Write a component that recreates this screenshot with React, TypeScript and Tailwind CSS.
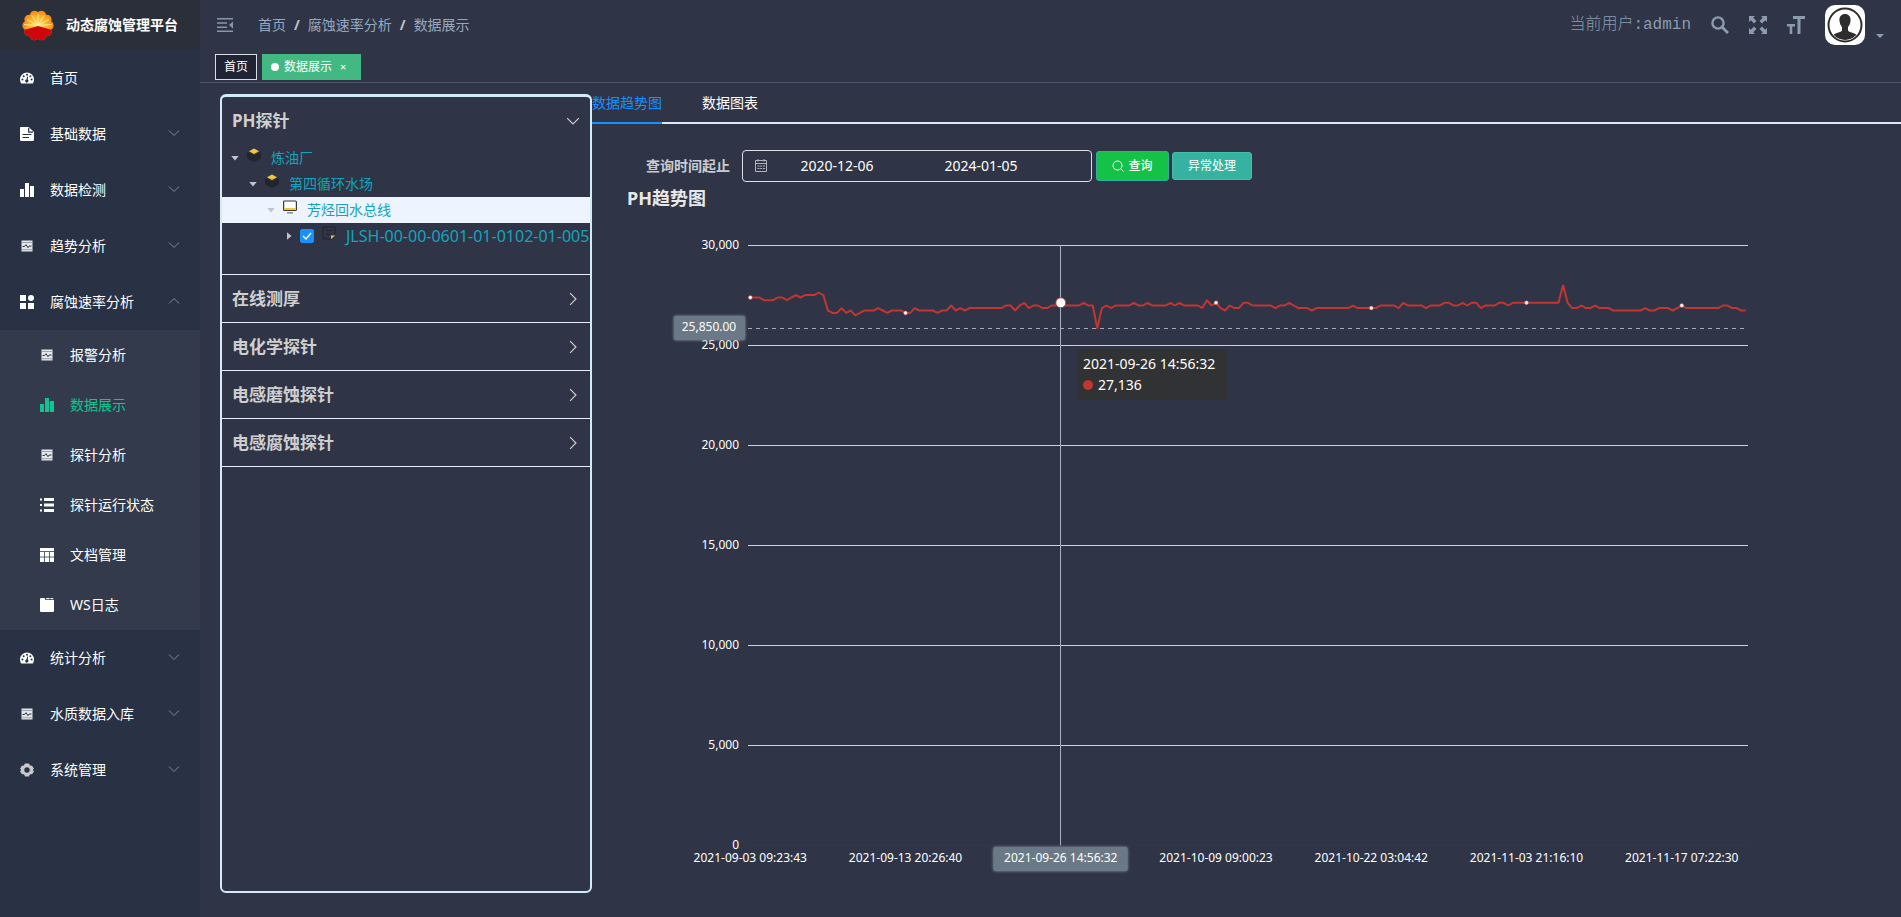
import React, { useState } from 'react'
import clsx from 'clsx'

type IconName = 'dashboard' | 'doc' | 'bars' | 'monitor' | 'grid' | 'list' | 'table' | 'tab' | 'gear'

interface MenuItem {
  label: string
  icon: IconName
  arrow?: 'down' | 'up'
  children?: { label: string; icon: IconName; active?: boolean }[]
}

const menu: MenuItem[] = [
  { label: '首页', icon: 'dashboard' },
  { label: '基础数据', icon: 'doc', arrow: 'down' },
  { label: '数据检测', icon: 'bars', arrow: 'down' },
  { label: '趋势分析', icon: 'monitor', arrow: 'down' },
  {
    label: '腐蚀速率分析',
    icon: 'grid',
    arrow: 'up',
    children: [
      { label: '报警分析', icon: 'monitor' },
      { label: '数据展示', icon: 'bars', active: true },
      { label: '探针分析', icon: 'monitor' },
      { label: '探针运行状态', icon: 'list' },
      { label: '文档管理', icon: 'table' },
      { label: 'WS日志', icon: 'tab' },
    ],
  },
  { label: '统计分析', icon: 'dashboard', arrow: 'down' },
  { label: '水质数据入库', icon: 'monitor', arrow: 'down' },
  { label: '系统管理', icon: 'gear', arrow: 'down' },
]

function MenuIcon({ name }: { name: IconName }) {
  return (
    <svg viewBox="0 0 14 14" className="h-3.5 w-3.5 shrink-0" fill="currentColor">
      {name === 'dashboard' && (
        <>
          <path d="M7 1.5a7 7 0 0 0-7 7c0 1.5.4 2.8 1.1 4h11.8c.7-1.2 1.1-2.5 1.1-4a7 7 0 0 0-7-7Z" />
          <g fill="#293145">
            <circle cx="2.4" cy="8.6" r="1" />
            <circle cx="3.7" cy="5.2" r="1" />
            <circle cx="7" cy="3.7" r="1" />
            <circle cx="10.4" cy="5.2" r="1" />
            <circle cx="11.6" cy="8.6" r="1" />
            <path d="M7.3 5.4 8.2 5.7 7.7 8.6A1.6 1.6 0 1 1 6.4 8.4Z" />
          </g>
        </>
      )}
      {name === 'doc' && (
        <>
          <path d="M1.2 0H8.5L14 5v7.8c0 .7-.5 1.2-1.2 1.2H1.2C.5 14 0 13.5 0 12.8V1.2C0 .5.5 0 1.2 0Z" />
          <path d="M8.7 1v4.1H13M2.5 7.5h9M2.5 10.5h6.5" fill="none" stroke="#293145" strokeWidth="1.2" />
        </>
      )}
      {name === 'bars' && <path d="M0 6h4v8H0ZM5 0h4v14H5ZM10 3h4v11h-4Z" />}
      {name === 'monitor' && (
        <g opacity=".88">
          <path d="M1.500 1.500h11v11h-11Z" />
          <path d="M1.500 3.500h11M1.500 10.700h11" stroke="#8b909c" strokeWidth=".7" />
          <path d="M2.500 7.500h2L6 5.700l2 3 1.200-1.700h2.300" fill="none" stroke="#293145" strokeWidth="1" />
        </g>
      )}
      {name === 'grid' && (
        <>
          <path d="M0 0h6v6H0ZM0 8h6v6H0ZM8 8h6v6H8Z" />
          <circle cx="11" cy="3" r="3" />
        </>
      )}
      {name === 'list' && <path d="M0 .5h2v2H0ZM4 0h10v3H4ZM0 6h2v2H0ZM4 5.5h10v3H4ZM0 11.5h2v2H0ZM4 11h10v3H4Z" />}
      {name === 'table' && (
        <>
          <path d="M0 0h14v14H0Z" />
          <path d="M0 3.5h14M0 9h14M4.5 4v10M9.5 4v10" stroke="#323a4c" strokeWidth=".8" />
        </>
      )}
      {name === 'tab' && (
        <>
          <path d="M1 0h3.5l1 2H14v11a1 1 0 0 1-1 1H1a1 1 0 0 1-1-1V1a1 1 0 0 1 1-1Z" />
          <path d="M6 0h3.5v1.2H6.5ZM10.3 0H13l.5 1.2h-2.9Z" />
        </>
      )}
      {name === 'gear' && (
        <path
          fill="#c9cacc"
          fillRule="evenodd"
          d="m4.800.5-.8 2-2.200.2L0 6l1.300 1L0 8.300l1.900 3 2.200-.1.900 2.300h4l.9-2.300 2.200.1 1.900-3L12.700 7 14 5.800l-1.900-3.100-2.200-.1L9 .5ZM7 4.300a2.700 2.700 0 1 1 0 5.400 2.700 2.700 0 0 1 0-5.400Z"
        />
      )}
    </svg>
  )
}

function Chevron({ dir, className }: { dir: 'down' | 'up' | 'right'; className: string }) {
  const paths = {
    down: 'M1 3.5 6 8.5 11 3.5',
    up: 'M1 8.5 6 3.5 11 8.5',
    right: 'M3.5 1 8.5 6 3.5 11',
  }
  return (
    <svg viewBox="0 0 12 12" className={className} fill="none" stroke="currentColor">
      <path d={paths[dir]} />
    </svg>
  )
}

function Logo() {
  const petals = Array.from({ length: 10 }, (_, i) => {
    const a = ((i * 36 + 18) * Math.PI) / 180
    return { x: 16 + Math.sin(a) * 11, y: 15.5 - Math.cos(a) * 10.5 }
  })
  return (
    <svg viewBox="0 0 32 31" className="h-[31px] w-8 shrink-0">
      <defs>
        <clipPath id="flower">
          <circle cx="16" cy="15.5" r="12" />
          {petals.map((p, i) => (
            <circle key={i} cx={p.x} cy={p.y} r="4.7" />
          ))}
        </clipPath>
        <radialGradient id="sun" cx=".5" cy=".5" r=".5">
          <stop offset="0" stopColor="#ffe46a" />
          <stop offset=".6" stopColor="#fdb022" />
          <stop offset="1" stopColor="#f5821a" />
        </radialGradient>
      </defs>
      <g clipPath="url(#flower)">
        <rect width="32" height="31" fill="url(#sun)" />
        <path
          d="M16 15.500 16 4M16 15.500 10 5.500M16 15.500 22 5.500M16 15.500 5 9.500M16 15.500 27 9.500M16 15.500 2 14.500M16 15.500 30 14.500"
          stroke="#fff3b0"
          strokeWidth=".8"
        />
        <path d="M0 20.500Q9 18 16 16 23 18 32 20.500V31H0Z" fill="#cf060c" />
      </g>
    </svg>
  )
}

function Sidebar() {
  return (
    <nav className="w-[200px] shrink-0 bg-[#293145] text-sm text-white">
      <a href="#" className="flex h-[50px] items-center gap-3 bg-[#2b2f3a] pl-[22px] font-bold">
        <Logo />
        动态腐蚀管理平台
      </a>
      <ul>
        {menu.map((item) => (
          <li key={item.label}>
            <a href="#" className="flex h-14 items-center pr-5 pl-5">
              <MenuIcon name={item.icon} />
              <span className="ml-4 flex-1">{item.label}</span>
              {item.arrow && <Chevron dir={item.arrow} className="mb-0.5 h-3 w-3 text-[#838997]" />}
            </a>
            {item.children && (
              <ul className="bg-[#323a4c]">
                {item.children.map((child) => (
                  <li key={child.label}>
                    <a
                      href="#"
                      className={clsx('flex h-[50px] items-center gap-4 pl-10', child.active && 'text-[#10c493]')}
                    >
                      <MenuIcon name={child.icon} />
                      {child.label}
                    </a>
                  </li>
                ))}
              </ul>
            )}
          </li>
        ))}
      </ul>
    </nav>
  )
}

function Navbar() {
  return (
    <header className="flex h-[50px] items-center text-[#97a8be]">
      <button type="button" aria-label="收起菜单" className="ml-[17px]">
        <svg viewBox="0 0 16 14" className="h-3.5 w-4" fill="#8996a8">
          <path d="M0 0h16v1.5H0ZM0 4.2h10v1.5H0ZM0 8.4h10v1.5H0ZM0 12.5h16V14H0ZM16 3.5v7L12 7Z" />
        </svg>
      </button>
      <nav className="ml-[25px] flex gap-2 text-sm">
        <a href="#">首页</a>
        <span className="font-bold text-[#c0c4cc]">/</span>
        <a href="#">腐蚀速率分析</a>
        <span className="font-bold text-[#c0c4cc]">/</span>
        <span>数据展示</span>
      </nav>
      <div className="ml-auto flex items-center pr-[17px] text-[#8b9bb0]">
        <span className="mr-5 font-['Liberation_Mono','Noto_Sans_CJK_SC',monospace] text-base font-light">
          当前用户:admin
        </span>
        <button type="button" aria-label="搜索" className="mr-5">
          <svg viewBox="0 0 18 18" className="h-[18px] w-[18px]" fill="none" stroke="currentColor">
            <circle cx="7" cy="7" r="5.6" strokeWidth="2.4" />
            <path d="m11 11 6 6" strokeWidth="2.8" />
          </svg>
        </button>
        <button type="button" aria-label="全屏" className="mr-5">
          <svg viewBox="0 0 18 18" className="h-[18px] w-[18px]" fill="currentColor">
            <path d="M0 0h6L4.2 1.8 7.5 5 5 7.5 1.8 4.2 0 6ZM18 0v6l-1.8-1.8L13 7.5 10.5 5l3.300-3.200L12 0ZM0 18v-6l1.800 1.800L5 10.5 7.5 13l-3.300 3.200L6 18ZM18 18h-6l1.800-1.800L10.5 13l2.500-2.500 3.200 3.300L18 12Z" />
          </svg>
        </button>
        <button type="button" aria-label="字号" className="mr-5">
          <svg viewBox="0 0 18 18" className="h-[18px] w-[18px]" fill="currentColor">
            <path d="M6 0h12v3h-4.5v15h-3V3H6ZM0 8h8v2.5H5.3V18H2.7v-7.5H0Z" />
          </svg>
        </button>
        <button type="button" aria-label="用户菜单" className="flex items-end gap-[11px]">
          <svg viewBox="0 0 40 40" className="h-10 w-10 rounded-[10px] bg-white">
            <clipPath id="face">
              <circle cx="20" cy="20" r="15" />
            </clipPath>
            <circle cx="20" cy="20" r="16.5" fill="none" stroke="#2d2d2d" strokeWidth="2" />
            <g clipPath="url(#face)" fill="#2d2d2d">
              <path d="M20 9c4 0 6 3 5.500 7-.3 3-1.500 5-2.500 6v3.500c1 2 7 2.500 10 5V38H7v-7.500c3-2.500 9-3 10-5V22c-1-1-2.200-3-2.500-6C14 12 16 9 20 9Z" />
            </g>
          </svg>
          <svg viewBox="0 0 8 4" className="mb-[7px] h-1 w-2" fill="currentColor">
            <path d="M0 0h8L4 4Z" />
          </svg>
        </button>
      </div>
    </header>
  )
}

function TagsView() {
  return (
    <div className="flex h-[33px] items-start gap-[5px] border-b border-[#495566] pt-1 pl-[15px] text-xs text-white">
      <a href="#" className="flex h-[26px] items-center border border-[#d8dce5] bg-[#1f2334] px-2">
        首页
      </a>
      <a href="#" className="flex h-[26px] items-center bg-[#42b983] px-[9px]">
        <span className="mr-[5px] h-2 w-2 rounded-full bg-white" />
        数据展示
        <span className="ml-2 w-3 text-[11px]">×</span>
      </a>
    </div>
  )
}

function Caret({ open, className }: { open?: boolean; className: string }) {
  return (
    <svg viewBox="0 0 8 8" className={clsx('h-2 w-2 shrink-0', className)} fill="currentColor">
      <path d={open ? 'M.3 2h7.4L4 6.5Z' : 'M2 .3v7.4L6.5 4Z'} />
    </svg>
  )
}

function StackIcon() {
  return (
    <svg viewBox="0 0 14 14" className="mb-1.5 h-3.5 w-3.5 shrink-0">
      <path d="M0 4v6.500l7 3.500 7-3.500V4L7 7Z" fill="#22252e" />
      <path d="m7 .5 5 2.700-5 2.800-5-2.800Z" fill="#f2c83a" />
    </svg>
  )
}

function ProbeTree() {
  const [checked, setChecked] = useState(true)

  return (
    <ul className="pb-[25px] text-sm whitespace-nowrap text-[#16a2bd]">
      <li className="flex h-[26px] items-center pl-[9px]">
        <Caret open className="text-[#c0c4cc]" />
        <span className="ml-2 flex items-center gap-2.5">
          <StackIcon />
          炼油厂
        </span>
      </li>
      <li className="flex h-[26px] items-center pl-[27px]">
        <Caret open className="text-[#c0c4cc]" />
        <span className="ml-2 flex items-center gap-2.5">
          <StackIcon />
          第四循环水场
        </span>
      </li>
      <li className="flex h-[26px] items-center bg-[#edf4fe] pl-[45px]">
        <Caret open className="text-[#c0c4cc]" />
        <span className="ml-2 flex items-center gap-2.5">
          <svg viewBox="0 0 14 14" className="mb-1.5 h-3.5 w-3.5 shrink-0">
            <rect x=".6" y="1" width="12.800" height="9.500" rx="1" fill="#fff" stroke="#3a3a3a" strokeWidth="1.200" />
            <path d="M1.200 8h11.600v2H1.200Z" fill="#f2c83a" />
            <path d="M4 12.800h6" stroke="#777" strokeWidth="1.200" />
          </svg>
          芳烃回水总线
        </span>
      </li>
      <li className="flex h-[26px] items-center pl-[63px]">
        <Caret className="text-[#c0c4cc]" />
        <label className="ml-[7px] flex items-center">
          <span className="relative h-3.5 w-3.5">
            <input
              type="checkbox"
              checked={checked}
              onChange={(e) => setChecked(e.target.checked)}
              className="block h-3.5 w-3.5 appearance-none rounded-xs border border-[#1890ff] checked:bg-[#1890ff]"
            />
            {checked && (
              <svg
                viewBox="0 0 14 14"
                className="pointer-events-none absolute inset-0"
                fill="none"
                stroke="#fff"
                strokeWidth="1.3"
              >
                <path d="m3 7 3 3 5-6" />
              </svg>
            )}
          </span>
          <svg viewBox="0 0 14 14" className="mr-2.5 mb-1.5 ml-2 h-3.5 w-3.5 shrink-0" fill="none">
            <path d="M13 8V2a1 1 0 0 0-1-1H2a1 1 0 0 0-1 1v10a1 1 0 0 0 1 1h7M4 4.5h7M4 8h4" stroke="#22252e" strokeWidth="1.2" />
            <path d="M9 13V9.5h4Z" fill="#f2c83a" />
          </svg>
          <span className="text-base">JLSH-00-00-0601-01-0102-01-005</span>
        </label>
      </li>
    </ul>
  )
}

const probeGroups = ['在线测厚', '电化学探针', '电感磨蚀探针', '电感腐蚀探针']

function ProbePanel() {
  return (
    <aside className="mt-[11px] mb-6 ml-5 w-[372px] shrink-0 overflow-hidden rounded-md border-2 border-t-3 border-[#d3ebf9] text-[#cfcfcf]">
      <section className="border-b border-[#e6effb]">
        <button type="button" className="flex h-12 w-full items-center justify-between px-2.5 text-[17px] font-bold">
          PH探针
          <Chevron dir="down" className="h-3.5 w-3.5" />
        </button>
        <ProbeTree />
      </section>
      {probeGroups.map((name) => (
        <button
          key={name}
          type="button"
          className="flex h-12 w-full items-center justify-between border-b border-[#e6effb] px-2.5 text-[17px] font-bold"
        >
          {name}
          <Chevron dir="right" className="h-3.5 w-3.5" />
        </button>
      ))}
    </aside>
  )
}

// consecutive readings, stored as [value, count]
const readings: [number, number][] = [
  [27400, 3], [27264, 3], [27400, 2], [27264, 1], [27400, 1], [27520, 1], [27400, 1], [27520, 3], [27650, 1],
  [27520, 1], [26750, 1], [26630, 2], [26870, 1], [26630, 1], [26750, 1], [26500, 1], [26630, 1], [26750, 3],
  [26870, 1], [26750, 1], [26630, 1], [26750, 3], [26630, 2], [26870, 1], [26750, 4], [26630, 1], [26750, 2],
  [27000, 1], [26750, 1], [26870, 1], [26750, 1], [26870, 8], [27000, 2], [26750, 1], [27000, 1], [27136, 1],
  [26870, 1], [27000, 2], [26870, 2], [27000, 2], [27136, 1], [27000, 4], [27136, 1], [27000, 2], [25850, 1],
  [26870, 1], [27000, 1], [26870, 1], [27000, 4], [27136, 1], [27000, 2], [27136, 1], [27000, 4], [27136, 1],
  [27000, 1], [27136, 1], [27000, 4], [26870, 1], [27264, 1], [27000, 1], [27136, 1], [26870, 1], [26750, 1],
  [27000, 1], [26870, 2], [27136, 2], [27000, 5], [26870, 1], [27000, 2], [27136, 1], [27000, 1], [26870, 3],
  [26750, 1], [26870, 8], [27000, 1], [26870, 5], [27000, 4], [26870, 1], [27136, 1], [27000, 4], [26870, 1],
  [27000, 3], [27136, 2], [27000, 2], [27136, 1], [27000, 1], [27136, 2], [26870, 1], [27000, 3], [27136, 2],
  [27000, 1], [27136, 11], [28030, 1], [27136, 1], [26870, 2], [27000, 1], [26870, 2], [27000, 1], [26870, 3],
  [26750, 7], [26870, 1], [26750, 2], [26870, 3], [26750, 1], [26870, 1], [27000, 1], [26870, 8], [27000, 2],
  [26870, 2], [26750, 2],
]
const series = readings.flatMap(([value, count]) => Array<number>(count).fill(value))

const yTicks = [30000, 25000, 20000, 15000, 10000, 5000, 0]
const xTicks = [
  '2021-09-03 09:23:43',
  '2021-09-13 20:26:40',
  '2021-09-26 14:56:32',
  '2021-10-09 09:00:23',
  '2021-10-22 03:04:42',
  '2021-11-03 21:16:10',
  '2021-11-17 07:22:30',
]
const tickEvery = 34
const activeIndex = 68

const left = 156
const right = 1156
const top = 33.5
const bottom = 633.5
const band = (right - left) / series.length
const xAt = (i: number) => left + band * (i + 0.5)
const yAt = (v: number) => bottom - (v / 30000) * (bottom - top)

function TrendChart() {
  const activeX = Math.floor(xAt(activeIndex)) + 0.5
  return (
    <svg viewBox="0 0 1309 680" className="block h-auto w-full text-xs" fill="#fff">
      <defs>
        <filter id="glow" x="-10%" y="-30%" width="120%" height="160%">
          <feDropShadow dx="0" dy="0" stdDeviation="1.5" floodColor="#8a97a3" />
        </filter>
      </defs>
      {yTicks.map((v) => (
        <g key={v}>
          <line x1={left} x2={right} y1={yAt(v)} y2={yAt(v)} stroke={v === 0 ? '#333842' : '#c9d2de'} />
          <text x={left - 9} y={yAt(v) + 3} textAnchor="end">
            {v.toLocaleString('en-US')}
          </text>
        </g>
      ))}

      <line x1={left} x2={right} y1={yAt(25850)} y2={yAt(25850)} stroke="#a3aab8" strokeDasharray="4 4" />
      <line x1={activeX} x2={activeX} y1={top} y2={bottom} stroke="#a9b0bd" />
      <polyline
        points={series.map((v, i) => `${xAt(i)},${yAt(v)}`).join(' ')}
        fill="none"
        stroke="#c23531"
        strokeWidth="2"
        strokeLinejoin="bevel"
      />
      {xTicks.map((_, i) => {
        const index = i * tickEvery
        return (
          <circle
            key={index}
            cx={xAt(index)}
            cy={yAt(series[index])}
            r={index === activeIndex ? 5 : 2}
            stroke="#c23531"
            strokeWidth={index === activeIndex ? 1 : 0.5}
          />
        )
      })}

      {/* axis pointer labels */}
      <rect x="82" y="104" width="71" height="24" rx="2" fill="#6a7985" filter="url(#glow)" />
      <text x="117" y="119" textAnchor="middle">
        25,850.00
      </text>
      <rect x={activeX - 67} y="635" width="134" height="24" rx="2" fill="#6a7985" filter="url(#glow)" />
      {xTicks.map((label, i) => (
        <text key={label} x={xAt(i * tickEvery)} y="650" textAnchor="middle">
          {label}
        </text>
      ))}

      <g className="text-sm">
        <rect x="485" y="137" width="150" height="51" rx="4" fill="#323232" fillOpacity=".9" />
        <text x="491" y="157">
          2021-09-26 14:56:32
        </text>
        <circle cx="496" cy="173" r="5" fill="#c23531" />
        <text x="506" y="178">
          27,136
        </text>
      </g>
    </svg>
  )
}

function TrendPanel() {
  const [start, setStart] = useState('2020-12-06')
  const [end, setEnd] = useState('2024-01-05')

  return (
    <section className="min-w-0 flex-1 text-white">
      <div role="tablist" className="flex h-[41px] border-b-2 border-[#dce9f5] text-sm">
        <button type="button" role="tab" aria-selected className="-mb-0.5 border-b-2 border-[#1890ff] text-[#1890ff]">
          数据趋势图
        </button>
        <button type="button" role="tab" aria-selected={false} className="ml-10">
          数据图表
        </button>
      </div>

      <form className="mt-[26px] flex items-center pl-[54px]" onSubmit={(e) => e.preventDefault()}>
        <label htmlFor="start" className="mr-3 text-sm font-bold text-[#c8ccd2]">
          查询时间起止
        </label>
        <div className="mr-1 flex h-8 w-[350px] items-center rounded border border-[#dcdfe6] pl-[11px]">
          <svg viewBox="0 0 14 14" className="h-3.5 w-3.5 shrink-0" fill="none" stroke="#b0b5be">
            <path d="M1.5 1.5h11v11h-11ZM1.5 4.5h11M4 0v2.5M10 0v2.5M3.5 7h2M6.2 7h2M9 7h2M3.5 9.5h2M6.2 9.5h2M9 9.5h2" />
          </svg>
          <input
            id="start"
            type="text"
            value={start}
            onChange={(e) => setStart(e.target.value)}
            className="mr-1.5 w-[138px] bg-transparent text-center text-sm focus:outline-none"
          />
          <input
            type="text"
            aria-label="结束日期"
            value={end}
            onChange={(e) => setEnd(e.target.value)}
            className="w-[138px] bg-transparent text-center text-sm focus:outline-none"
          />
        </div>
        <button
          type="submit"
          className="mr-[3px] flex h-[30px] w-[73px] items-center justify-center gap-1 rounded-[3px] border border-[#2fae9a] bg-[#13c246] text-xs font-medium"
        >
          <svg viewBox="0 0 12 12" className="h-3 w-3" fill="none" stroke="currentColor">
            <circle cx="5.5" cy="5.5" r="4.5" />
            <path d="m9 9 2.5 2.5" />
          </svg>
          查询
        </button>
        <button
          type="button"
          className="h-7 w-20 rounded-[3px] border border-[#45bda9] bg-[#36b3a0] text-xs"
        >
          异常处理
        </button>
      </form>

      <h2 className="mt-0.5 pl-[35px] text-lg leading-7 font-bold text-[#e8e8e8]">PH趋势图</h2>
      <TrendChart />
    </section>
  )
}

export default function App() {
  return (
    <div className="flex min-h-screen bg-[#2f3546] font-['Noto_Sans','Noto_Sans_CJK_SC',sans-serif]">
      <Sidebar />
      <main className="flex min-w-0 flex-1 flex-col">
        <Navbar />
        <TagsView />
        <div className="flex flex-1">
          <ProbePanel />
          <TrendPanel />
        </div>
      </main>
    </div>
  )
}
